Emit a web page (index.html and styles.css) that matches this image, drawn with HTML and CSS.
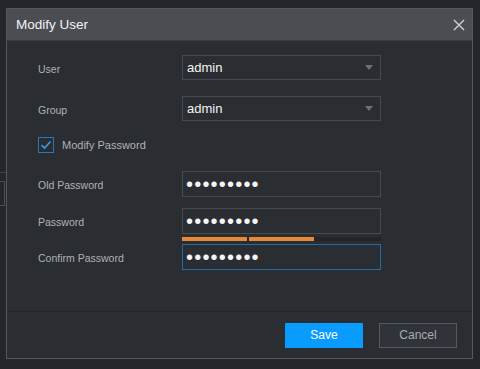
FILE: index.html
```html
<!DOCTYPE html>
<html>
<head>
    <link rel="stylesheet" href="styles.css">
</head>
<body>
    <div class="page">
        <div class="page-line"></div>
        <div class="page-box"></div>
    </div>

<div class="dialog">
    <div class="dialog-head">
        <span class="dialog-title">Modify User</span>
        <svg class="close" width="12" height="12" viewBox="0 0 12 12"><path d="M1 1 L11 11 M11 1 L1 11" stroke="#c9cacc" stroke-width="1.5"/></svg>
    </div>

    <form class="dialog-body" id="user-form">
        <div class="row">
            <label for="user">User</label>
            <div class="select">
                <span>admin</span>
                <i class="arrow"></i>
            </div>
        </div>

        <div class="row gap-lg">
            <label for="group">Group</label>
            <div class="select">
                <span>admin</span>
                <i class="arrow"></i>
            </div>
        </div>

        <div class="check-row">
            <span class="checkbox">
                <svg width="12" height="10" viewBox="0 0 12 10"><path d="M1.5 5.2 L4.5 8 L10.5 1.5" fill="none" stroke="#3a9be6" stroke-width="1.6"/></svg>
            </span>
            <span class="check-label">Modify Password</span>
        </div>

        <div class="row pw-first">
            <label for="old-password">Old Password</label>
            <input type="password" id="old-password" value="123456789">
        </div>

        <div class="row pw-next">
            <label for="password">Password</label>
            <input type="password" id="password" value="123456789">
        </div>

        <div class="strength">
            <span class="seg on"></span>
            <span class="seg on"></span>
            <span class="seg"></span>
        </div>

        <div class="row pw-confirm">
            <label for="confirm">Confirm Password</label>
            <input type="password" id="confirm" class="focused" value="123456789">
        </div>
    </form>

    <div class="dialog-foot">
        <button type="button" class="btn save">Save</button>
        <button type="button" class="btn cancel">Cancel</button>
    </div>
</div>
</body>
</html>
```

FILE: styles.css
```css
*{
    margin: 0;
    padding: 0;
    box-sizing: border-box;
}
body {
    width: 480px;
    height: 369px;
    overflow: hidden;
    font-family: "Liberation Sans", Arial, sans-serif;
    background-color: #23262b;
}

/* page behind the dialog */
.page {
    padding-top: 172px;
}
.page-line {
    width: 6px;
    height: 1px;
    background: #3c3f44;
}
.page-box {
    margin-top: 8px;
    width: 5px;
    height: 25px;
    border: 1px solid #4c4f54;
    border-left: none;
}

.dialog {
    position: fixed;
    left: 6px;
    top: 8px;
    width: 467px;
    height: 351px;
    border: 1px solid #55585d;
    background: #2a2d32;
    display: flex;
    flex-direction: column;
}

.dialog-head {
    height: 32px;
    background: #4a4d52;
    display: flex;
    align-items: center;
    justify-content: space-between;
    padding: 0 7px 0 9px;
    border-bottom: 1px solid #3a3d42;
}
.dialog-title {
    color: #f2f2f2;
    font-size: 13.5px;
}

.dialog-body {
    flex: 1;
    padding: 14px 0 0 31px;
    border-bottom: 1px solid #222428;
}

.row {
    display: flex;
    align-items: center;
}
.row label {
    width: 144px;
    color: #b0b2b4;
    font-size: 10.5px;
    padding-top: 2px;
}
.gap-lg {
    margin-top: 16px;
}

.select {
    width: 199px;
    height: 25px;
    border: 1px solid #46494e;
    display: flex;
    align-items: center;
    justify-content: space-between;
    padding: 0 7px 0 4px;
    color: #f4f4f4;
    font-size: 13px;
}
.arrow {
    width: 0;
    height: 0;
    border-left: 4.5px solid transparent;
    border-right: 4.5px solid transparent;
    border-top: 5px solid #6d7075;
}

.check-row {
    margin-top: 16px;
    display: flex;
    align-items: center;
    gap: 8px;
}
.checkbox {
    width: 16px;
    height: 16px;
    border: 1px solid #2a78b8;
    display: flex;
    align-items: center;
    justify-content: center;
}
.check-label {
    color: #b0b2b4;
    font-size: 11px;
}

input {
    width: 199px;
    height: 26px;
    border: 1px solid #46494e;
    background: #2a2d32;
    color: #f6f6f6;
    padding: 0 3px;
    font-family: "Liberation Sans", Arial, sans-serif;
    font-size: 20px;
    letter-spacing: 1.2px;
    outline: none;
}
input.focused {
    border-color: #1f6ea9;
}

.pw-first {
    margin-top: 18px;
}
.pw-next {
    margin-top: 11px;
}
.pw-confirm {
    margin-top: 3px;
}

.strength {
    margin: 3px 0 0 144px;
    width: 200px;
    height: 4px;
    background: #222428;
    display: flex;
    gap: 2px;
}
.seg {
    width: 65px;
}
.seg.on {
    background: #e8893a;
}

.dialog-foot {
    height: 46px;
    display: flex;
    justify-content: flex-end;
    align-items: center;
    gap: 16px;
    padding-right: 15px;
}
.btn {
    width: 78px;
    height: 25px;
    font-family: "Liberation Sans", Arial, sans-serif;
    font-size: 12px;
}
.save {
    background: #0a9bff;
    border: none;
    color: #ffffff;
}
.cancel {
    background: #30333a;
    border: 1px solid #55585d;
    color: #a9abae;
}
```
